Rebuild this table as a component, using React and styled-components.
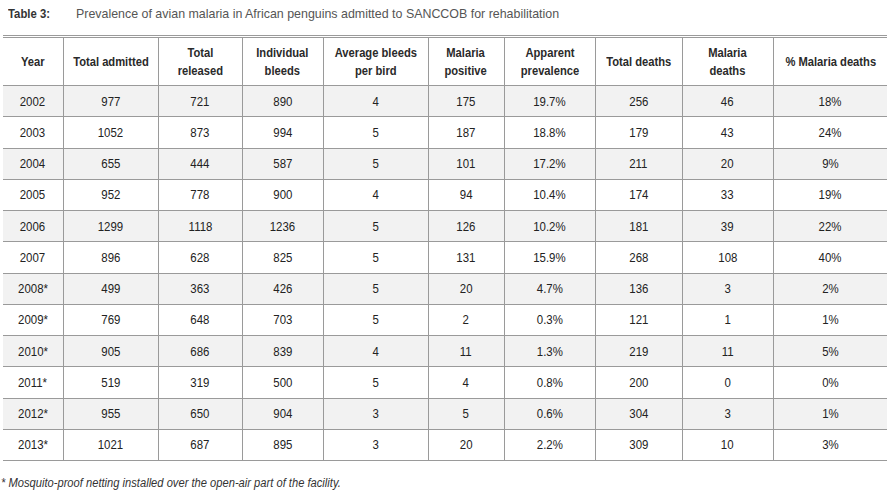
import React from "react";
import styled, { createGlobalStyle } from "styled-components";

const GlobalStyle = createGlobalStyle`
  html, body {
    margin: 0;
    padding: 0;
    background: #fff;
  }
  body {
    font-family: "Liberation Sans", Arial, sans-serif;
    color: #222;
  }
`;

// the print font is a condensed grotesque; squeeze Liberation Sans to its width
const Narrow = styled.span`
  display: inline-block;
  white-space: nowrap;
  transform: scaleX(${(p) => p.$x || 0.86});
  transform-origin: ${(p) => p.$origin || "center"};
`;

const Page = styled.div`
  width: 889px;
  height: 496px;
  padding-top: 6px;
  box-sizing: border-box;
`;

const Caption = styled.div`
  display: flex;
  align-items: baseline;
  padding-left: 8px;
  height: 18px;
  font-size: 13.5px;
  & > b {
    width: 68px;
    color: #333;
  }
  & > span {
    color: #555;
    font-size: 13px;
  }
`;

const Table = styled.table`
  margin: 11px 0 0 3px;
  width: 884px;
  table-layout: fixed;
  border-collapse: collapse;
  border-top: 3px double #9a9a9a;
  border-bottom: 1px solid #9a9a9a;
  font-size: 13px;
`;

const HeadCell = styled.th`
  height: 47px;
  padding: 0;
  font-weight: bold;
  color: #2a2a2a;
  line-height: 18px;
  text-align: center;
  border-left: ${(p) => (p.$first ? "none" : "1px solid #9a9a9a")};
  border-bottom: 1px solid #9a9a9a;
`;

const Row = styled.tr`
  background: ${(p) => (p.$shade ? "#f2f2f2" : "#fff")};
`;

const Cell = styled.td`
  height: 30.25px;
  padding: 0;
  text-align: center;
  color: #222;
  border-left: ${(p) => (p.$first ? "none" : "1px solid #9a9a9a")};
  border-bottom: 1px solid #9a9a9a;
`;

const Footnote = styled.div`
  margin-top: 15px;
  padding-left: 1px;
  font-size: 12px;
  font-style: italic;
  color: #333;
`;

const widths = [60, 95, 84, 81, 105, 76, 91, 87, 91, 114];

const headers = [
  ["Year"],
  ["Total admitted"],
  ["Total", "released"],
  ["Individual", "bleeds"],
  ["Average bleeds", "per bird"],
  ["Malaria", "positive"],
  ["Apparent", "prevalence"],
  ["Total deaths"],
  ["Malaria", "deaths"],
  ["% Malaria deaths"],
];

const rows = [
  ["2002", "977", "721", "890", "4", "175", "19.7%", "256", "46", "18%"],
  ["2003", "1052", "873", "994", "5", "187", "18.8%", "179", "43", "24%"],
  ["2004", "655", "444", "587", "5", "101", "17.2%", "211", "20", "9%"],
  ["2005", "952", "778", "900", "4", "94", "10.4%", "174", "33", "19%"],
  ["2006", "1299", "1118", "1236", "5", "126", "10.2%", "181", "39", "22%"],
  ["2007", "896", "628", "825", "5", "131", "15.9%", "268", "108", "40%"],
  ["2008*", "499", "363", "426", "5", "20", "4.7%", "136", "3", "2%"],
  ["2009*", "769", "648", "703", "5", "2", "0.3%", "121", "1", "1%"],
  ["2010*", "905", "686", "839", "4", "11", "1.3%", "219", "11", "5%"],
  ["2011*", "519", "319", "500", "5", "4", "0.8%", "200", "0", "0%"],
  ["2012*", "955", "650", "904", "3", "5", "0.6%", "304", "3", "1%"],
  ["2013*", "1021", "687", "895", "3", "20", "2.2%", "309", "10", "3%"],
];

const App = () => {
  return (
    <>
      <GlobalStyle />
      <Page>
        <Caption>
          <b>
            <Narrow $x={0.84} $origin="left">Table 3:</Narrow>
          </b>
          <span>
            <Narrow $x={0.955} $origin="left">
              Prevalence of avian malaria in African penguins admitted to SANCCOB for
              rehabilitation
            </Narrow>
          </span>
        </Caption>
        <Table>
          <colgroup>
            {widths.map((w, i) => (
              <col key={i} style={{ width: w }} />
            ))}
          </colgroup>
          <thead>
            <tr>
              {headers.map((h, i) => (
                <HeadCell key={i} $first={i === 0}>
                  <Narrow $x={0.86}>
                    {h.map((line, j) => (
                      <React.Fragment key={j}>
                        {j > 0 && <br />}
                        {line}
                      </React.Fragment>
                    ))}
                  </Narrow>
                </HeadCell>
              ))}
            </tr>
          </thead>
          <tbody>
            {rows.map((r, i) => (
              <Row key={r[0]} $shade={i % 2 === 0}>
                {r.map((v, j) => (
                  <Cell key={j} $first={j === 0}>
                    <Narrow $x={0.88}>{v}</Narrow>
                  </Cell>
                ))}
              </Row>
            ))}
          </tbody>
        </Table>
        <Footnote>
          <Narrow $x={0.93} $origin="left">
            * Mosquito-proof netting installed over the open-air part of the facility.
          </Narrow>
        </Footnote>
      </Page>
    </>
  );
};

export default App;
